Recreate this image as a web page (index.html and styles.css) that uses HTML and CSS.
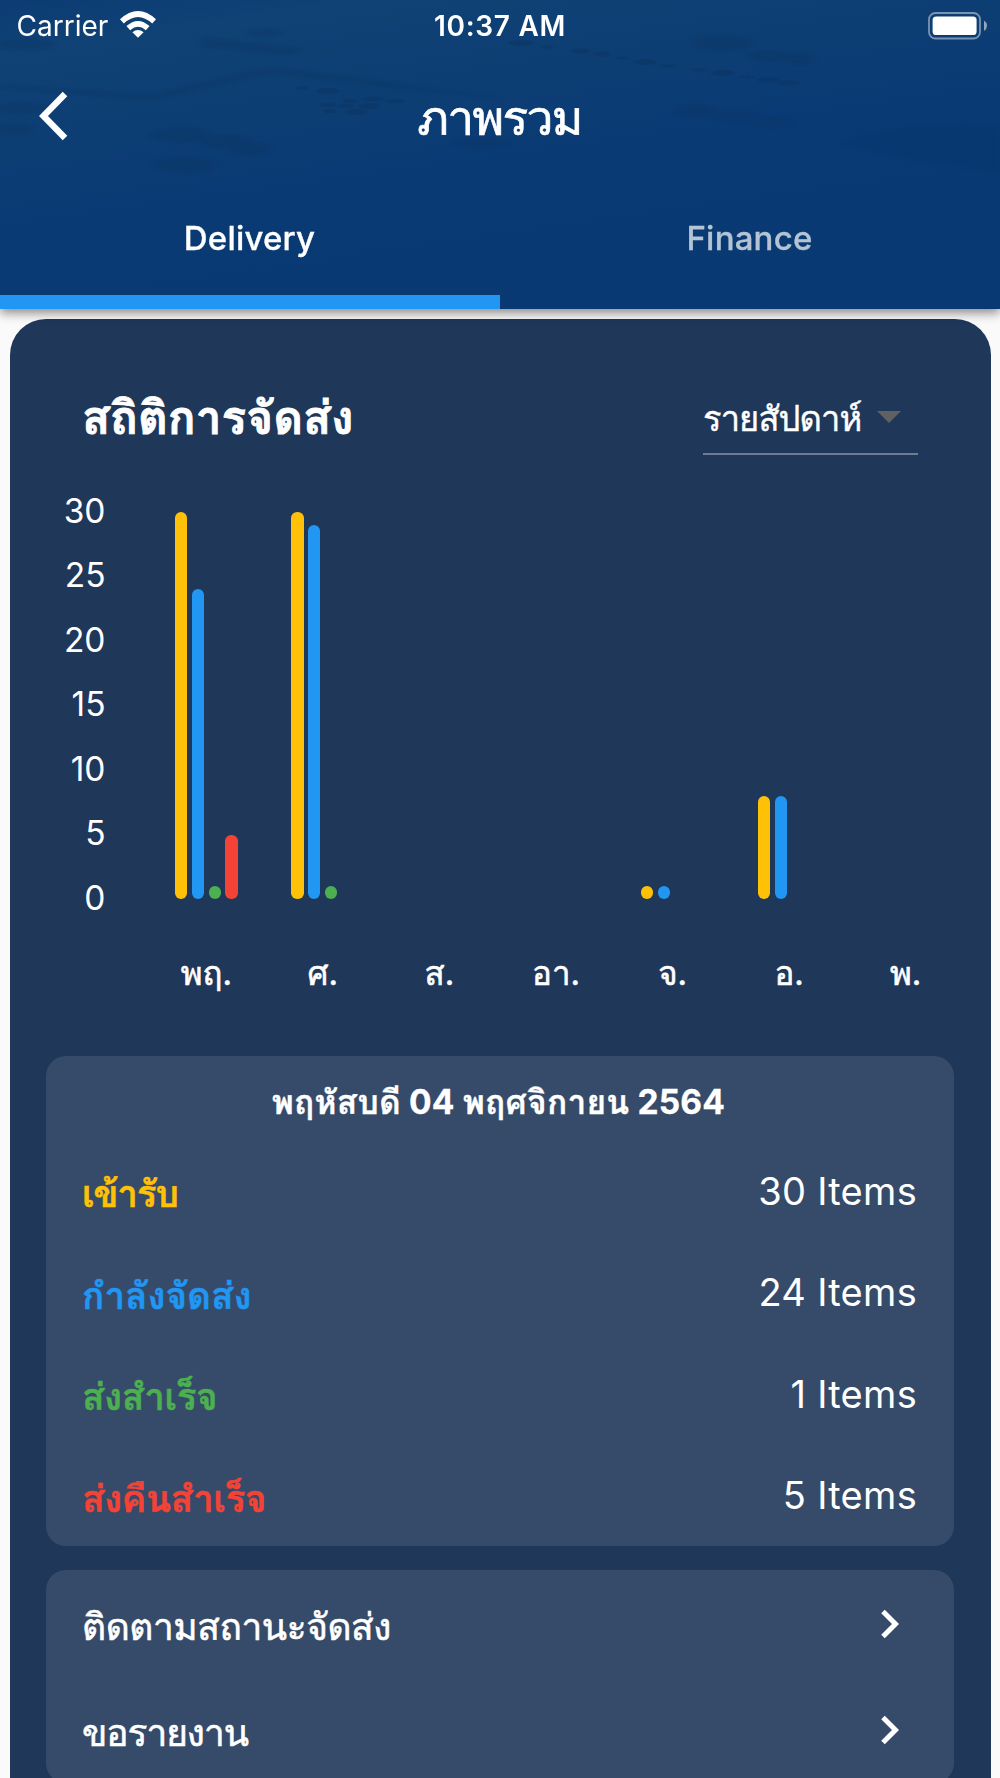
FILE: index.html
```html
<!DOCTYPE html>
<html lang="th">
<head>
<meta charset="utf-8">
<title>ภาพรวม</title>
<link rel="stylesheet" href="styles.css">
</head>
<body>
<header class="header">
  <svg class="header-art" viewBox="0 0 1000 309" preserveAspectRatio="none" aria-hidden="true">
    <defs>
      <filter id="soft" x="-20%" y="-20%" width="140%" height="140%"><feGaussianBlur stdDeviation="3 1.5"/></filter>
      <filter id="edge"><feGaussianBlur stdDeviation="1 .5"/></filter>
    </defs>
    <g fill="#0a3463" opacity=".6" filter="url(#edge)">
      <ellipse cx="328" cy="91" rx="11" ry="3"/>
      <ellipse cx="373" cy="99" rx="10" ry="2.5"/>
      <ellipse cx="395" cy="101" rx="9" ry="2"/>
      <ellipse cx="350" cy="101" rx="7" ry="2"/>
      <ellipse cx="328" cy="105" rx="7" ry="2"/>
      <ellipse cx="346" cy="106" rx="7" ry="2"/>
      <ellipse cx="369" cy="106" rx="10" ry="3"/>
      <ellipse cx="357" cy="112" rx="10" ry="3"/>
      <ellipse cx="330" cy="111" rx="6" ry="2"/>
      <ellipse cx="303" cy="88" rx="6" ry="2"/>
      <ellipse cx="521" cy="43" rx="12" ry="3"/>
      <ellipse cx="547" cy="47" rx="6" ry="1.5"/>
      <ellipse cx="581" cy="51" rx="9" ry="2.5"/>
      <ellipse cx="602" cy="54" rx="8" ry="2.5"/>
      <ellipse cx="622" cy="58" rx="5" ry="1.5"/>
      <ellipse cx="645" cy="62" rx="11" ry="3"/>
      <ellipse cx="668" cy="66" rx="6" ry="1.5"/>
      <ellipse cx="699" cy="70" rx="6" ry="1.5"/>
      <ellipse cx="723" cy="73" rx="11" ry="3"/>
      <ellipse cx="747" cy="77" rx="6" ry="1.5"/>
      <ellipse cx="768" cy="80" rx="10" ry="2.5"/>
      <ellipse cx="789" cy="83" rx="10" ry="2.5"/>
    </g>
    <g fill="#0a3463" opacity=".38" filter="url(#soft)">
      <path d="M205 38 L302 49 L290 55 L200 46Z"/>
      <ellipse cx="25" cy="45" rx="28" ry="5"/>
      <ellipse cx="265" cy="33" rx="16" ry="3"/>
      <ellipse cx="722" cy="43" rx="28" ry="7"/>
      <ellipse cx="770" cy="56" rx="20" ry="5"/>
      <ellipse cx="798" cy="59" rx="16" ry="5"/>
      <ellipse cx="697" cy="111" rx="20" ry="6"/>
      <ellipse cx="736" cy="117" rx="20" ry="5"/>
      <ellipse cx="772" cy="122" rx="18" ry="5"/>
      <ellipse cx="20" cy="108" rx="30" ry="5"/>
      <ellipse cx="15" cy="129" rx="18" ry="4"/>
      <ellipse cx="180" cy="135" rx="28" ry="7"/>
      <ellipse cx="225" cy="142" rx="25" ry="6"/>
      <ellipse cx="250" cy="149" rx="20" ry="6"/>
      <ellipse cx="185" cy="165" rx="30" ry="7"/>
      <ellipse cx="480" cy="143" rx="26" ry="4"/>
      <path d="M0 85 L150 95 L270 68 L400 84 L500 98 L400 88 L270 73 L150 100 L0 88Z"/>
      <path d="M840 142 Q920 120 1000 126 L1000 172 Q900 160 840 142Z" opacity=".35"/>
    </g>
  </svg>
  <div class="status">
    <div class="status-left">
      <span class="carrier">Carrier</span>
      <svg class="wifi" viewBox="0 0 36 27" aria-hidden="true">
        <path fill="#fff" d="M18 26.8 L12.4 21.2 Q18 16.6 23.6 21.2Z"/>
        <path fill="none" stroke="#fff" stroke-width="5.6" d="M8.3 17.2 Q18 8.6 27.7 17.2"/>
        <path fill="none" stroke="#fff" stroke-width="5.6" d="M1.9 10.4 Q18 -4.4 34.1 10.4"/>
      </svg>
    </div>
    <span class="time">10:37 AM</span>
    <svg class="battery" viewBox="0 0 60 28" aria-hidden="true">
      <rect x="1" y="1" width="51" height="25.5" rx="6.5" fill="none" stroke="#fff" stroke-opacity=".45" stroke-width="1.8"/>
      <rect x="4.6" y="4.4" width="44" height="18.6" rx="3.6" fill="#fff"/>
      <path fill="#fff" fill-opacity=".55" d="M56 8.6 Q59 10.5 59 13.7 T56 19Z"/>
    </svg>
  </div>
  <div class="navbar">
    <svg class="back" viewBox="0 0 30 50" aria-hidden="true"><path d="M26 3 L4.5 25 L26 47" fill="none" stroke="#fff" stroke-width="6.4"/></svg>
    <h1 class="title">ภาพรวม</h1>
    <span class="back-spacer"></span>
  </div>
  <nav class="tabs">
    <div class="tab tab-active"><span>Delivery</span></div>
    <div class="tab"><span>Finance</span></div>
  </nav>
</header>
<main class="panel">
  <div class="panel-head">
    <h2 class="heading">สถิติการจัดส่ง</h2>
    <div class="select"><span class="select-text">รายสัปดาห์</span><svg class="caret" viewBox="0 0 24 12" aria-hidden="true"><path fill="#616161" d="M0 0H24L12 12Z"/></svg></div>
  </div>
  <div class="chart">
    <div class="y-axis"><span>30</span><span>25</span><span>20</span><span>15</span><span>10</span><span>5</span><span>0</span></div>
    <div class="plot">
      <div class="day"><div class="bars"><i class="bar amber" style="height:100%"></i><i class="bar blue" style="height:80%"></i><i class="bar green" style="height:3.33%"></i><i class="bar red" style="height:16.67%"></i></div><span class="label">พฤ.</span></div>
      <div class="day"><div class="bars"><i class="bar amber" style="height:100%"></i><i class="bar blue" style="height:96.67%"></i><i class="bar green" style="height:3.33%"></i></div><span class="label">ศ.</span></div>
      <div class="day"><div class="bars"></div><span class="label">ส.</span></div>
      <div class="day"><div class="bars"></div><span class="label">อา.</span></div>
      <div class="day"><div class="bars"><i class="bar amber" style="height:3.33%"></i><i class="bar blue" style="height:3.33%"></i></div><span class="label">จ.</span></div>
      <div class="day"><div class="bars"><i class="bar amber" style="height:26.67%"></i><i class="bar blue" style="height:26.67%"></i></div><span class="label">อ.</span></div>
      <div class="day"><div class="bars"></div><span class="label">พ.</span></div>
    </div>
  </div>
  <section class="card summary">
    <h3 class="date">พฤหัสบดี 04 พฤศจิกายน 2564</h3>
    <div class="row"><span class="name c-amber">เข้ารับ</span><span class="value">30 Items</span></div>
    <div class="row"><span class="name c-blue">กำลังจัดส่ง</span><span class="value">24 Items</span></div>
    <div class="row"><span class="name c-green">ส่งสำเร็จ</span><span class="value">1 Items</span></div>
    <div class="row"><span class="name c-red">ส่งคืนสำเร็จ</span><span class="value">5 Items</span></div>
  </section>
  <section class="card links">
    <div class="link"><span class="link-text">ติดตามสถานะจัดส่ง</span><svg class="chevron" viewBox="0 0 18 30" aria-hidden="true"><path d="M2 2.5 L14.5 15 L2 27.5" fill="none" stroke="#fff" stroke-width="5"/></svg></div>
    <div class="link"><span class="link-text tight">ขอรายงาน</span><svg class="chevron" viewBox="0 0 18 30" aria-hidden="true"><path d="M2 2.5 L14.5 15 L2 27.5" fill="none" stroke="#fff" stroke-width="5"/></svg></div>
  </section>
</main>
</body>
</html>
```
FILE: styles.css
```css
* { box-sizing: border-box; }
body {
  margin: 0;
  height: 1778px;
  overflow: hidden;
  background: #fafafa;
  color: #fff;
  font-family: Inter, Loma, "Noto Sans Thai Looped", "Noto Sans Thai", sans-serif;
}
h1, h2, h3 { margin: 0; }
svg { display: block; flex: none; }

.header {
  position: relative;
  height: 309px;
  display: flex;
  flex-direction: column;
  background: linear-gradient(172deg, #0b3b72 0%, #104276 12%, #0d3e73 32%, #0a3a73 52%, #093972 100%);
  box-shadow: 0 4px 10px rgba(0, 0, 0, .45);
}
.header-art { position: absolute; inset: 0; width: 100%; height: 100%; }
.status, .navbar, .tabs { position: relative; }

.status {
  height: 50px;
  display: grid;
  grid-template-columns: 1fr auto 1fr;
  align-items: center;
  padding: 0 12px;
}
.status-left { display: flex; align-items: center; gap: 12px; padding-left: 4.5px; }
.carrier { font-size: 28px; line-height: 50px; }
.wifi { width: 36px; height: 27px; margin-bottom: 3px; }
.time { font-size: 28px; font-weight: 600; line-height: 52px; letter-spacing: .7px; }
.battery { width: 60px; height: 28px; justify-self: end; }

.navbar {
  height: 136px;
  display: flex;
  align-items: center;
  justify-content: space-between;
  padding: 0 40px 0 39px;
}
.back, .back-spacer { width: 30px; height: 50px; }
.back { margin-bottom: 4px; }
.title {
  font-size: 48px;
  font-weight: 400;
  line-height: 60px;
  padding-bottom: 1px;
  letter-spacing: -1.7px;
  -webkit-text-stroke: .7px;
}

.tabs { flex: 1; display: flex; }
.tab {
  flex: 1;
  display: flex;
  justify-content: center;
  padding: 32px 1px 0 0;
  font-size: 33px;
  line-height: 40px;
  font-weight: 500;
  letter-spacing: .2px;
  -webkit-text-stroke: .3px;
  color: #b5c4d5;
  border-bottom: 14px solid transparent;
}
.tab-active { color: #fff; border-bottom-color: #2196f3; }

.panel {
  margin: 10px 9.5px 0 10px;
  height: 1500px;
  border-radius: 36px 36px 0 0;
  background: #1f3759;
  display: flex;
  flex-direction: column;
  padding: 0 36.5px 0 36px;
}
.panel-head {
  height: 136px;
  display: flex;
  justify-content: space-between;
  align-items: flex-end;
  padding: 0 36px;
}
.heading {
  font-size: 46px;
  font-weight: 700;
  line-height: 72px;
  padding-bottom: 2px;
  -webkit-text-stroke: .8px;
}
.select {
  width: 215px;
  height: 72px;
  display: flex;
  align-items: center;
  justify-content: space-between;
  padding-right: 17px;
  border-bottom: 2px solid #6f7c90;
}
.select-text {
  font-size: 34.5px;
  line-height: 60px;
  padding-top: 2px;
  letter-spacing: -.9px;
  -webkit-text-stroke: .4px;
}
.caret { width: 24px; height: 12px; margin-bottom: 2px; }

.chart { height: 600.5px; display: flex; padding-top: 24px; }
.y-axis {
  width: 59.5px;
  height: 451px;
  flex: none;
  display: flex;
  flex-direction: column;
  justify-content: space-between;
  text-align: right;
  font-size: 33.5px;
  line-height: 64.4px;
}
.plot {
  width: 816px;
  margin-left: 42.5px;
  padding-top: 33px;
  display: grid;
  grid-template-columns: repeat(7, 1fr);
  flex: none;
}
.day { display: flex; flex-direction: column; align-items: center; }
.bars { width: 63px; height: 387px; display: flex; align-items: flex-end; gap: 4.7px; }
.bar { width: 12.2px; border-radius: 6.1px; }
.label { margin-top: 44px; font-size: 33px; line-height: 60px; -webkit-text-stroke: .6px; }
.amber { background: #ffc107; }
.blue { background: #2196f3; }
.green { background: #4caf50; }
.red { background: #f44336; }

.card { border-radius: 20px; background: #364b69; flex: none; }
.summary { height: 490.5px; padding: 0 37px 0 36px; }
.date {
  height: 92px;
  padding-right: 2px;
  text-align: center;
  font-size: 33.5px;
  line-height: 92px;
  font-weight: 700;
  letter-spacing: .2px;
  -webkit-text-stroke: .3px;
}
.row { height: 101.5px; display: flex; align-items: center; justify-content: space-between; }
.name { font-size: 37px; font-weight: 600; line-height: 60px; padding-bottom: 8px; -webkit-text-stroke: .4px; }
.value { font-size: 38px; line-height: 60px; padding-bottom: 15px; letter-spacing: .3px; }
.c-amber { color: #ffc107; letter-spacing: -1.3px; }
.c-blue { color: #2196f3; letter-spacing: -.1px; }
.c-green { color: #4caf50; letter-spacing: -.5px; }
.c-red { color: #f44336; letter-spacing: -.55px; }

.links { height: 213px; margin-top: 24px; padding: 0 55.5px 0 36px; }
.link { height: 106px; display: flex; align-items: center; justify-content: space-between; }
.link-text {
  font-size: 37px;
  line-height: 60px;
  padding-top: 7px;
  letter-spacing: -.4px;
  -webkit-text-stroke: .6px;
}
.tight { letter-spacing: -1px; }
.chevron { width: 18px; height: 30px; margin-top: 1px; }
```
